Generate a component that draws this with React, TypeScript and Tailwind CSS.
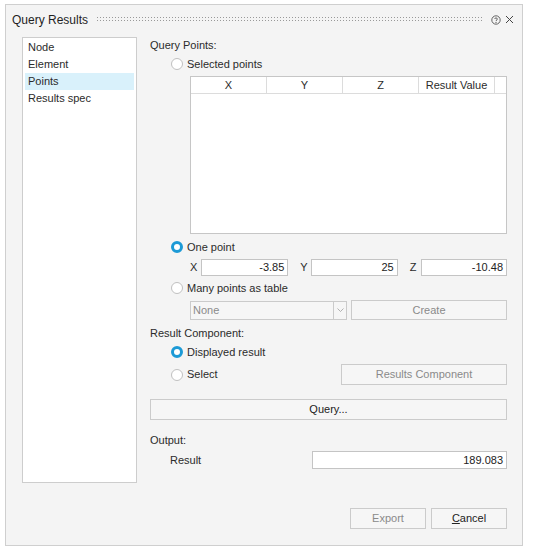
import React from 'react';

const font = { fontFamily: '"Liberation Sans", Arial, sans-serif' };

function Radio({ checked, label }: { checked?: boolean; label: string }) {
  return (
    <div className="flex items-center gap-[4px] pl-[21px]">
      {checked ? (
        <span className="h-[12px] w-[12px] rounded-full border-[3px] border-[#1c9ad6] bg-white" />
      ) : (
        <span className="h-[12px] w-[12px] rounded-full border border-[#c0c0c0] bg-white" />
      )}
      <span className="text-[#2b2b2b]">{label}</span>
    </div>
  );
}

function Field({ value, className }: { value: string; className: string }) {
  return (
    <div className={`flex h-[17px] items-center justify-end border border-[#c4c4c4] bg-white pr-[3px] text-[#222] ${className}`}>
      {value}
    </div>
  );
}

function Button({ label, className, disabled }: { label: React.ReactNode; className: string; disabled?: boolean }) {
  return (
    <div
      className={`flex items-center justify-center border border-[#cbcbcb] bg-[#f6f6f6] ${disabled ? 'text-[#8a8a8a]' : 'text-[#222]'} ${className}`}
    >
      {label}
    </div>
  );
}

export default function App() {
  return (
    <div className="h-[553px] w-[537px] bg-white pl-[5px] pt-[4px] text-[11px]" style={font}>
      <div className="flex h-[542px] w-[518px] flex-col border border-[#cfcfcf] bg-[#f4f4f4]">
        {/* title bar */}
        <div className="flex h-[29px] items-center pl-[6px] pr-[8px]">
          <span className="text-[12px] text-[#1f1f1f]">Query Results</span>
          <div className="ml-[8px] mr-[8px] h-[7px] flex-1 bg-[radial-gradient(circle,#999_0.7px,transparent_0.9px)] bg-[length:3px_3px]" />
          <svg width="10" height="10" viewBox="0 0 10 10" className="mr-[4px]">
            <circle cx="5" cy="5" r="4.2" fill="none" stroke="#555" strokeWidth="0.9" />
            <path d="M3.6 4 C3.6 2.6 6.4 2.6 6.4 4 C6.4 5 5 5 5 6" fill="none" stroke="#555" strokeWidth="0.9" />
            <circle cx="5" cy="7.4" r="0.55" fill="#555" />
          </svg>
          <svg width="9" height="9" viewBox="0 0 9 9">
            <path d="M1 1 L8 8 M8 1 L1 8" stroke="#444" strokeWidth="1" />
          </svg>
        </div>

        <div className="flex pt-[3px]">
          {/* left list */}
          <div className="ml-[16px] h-[446px] w-[115px] border border-[#cdcdcd] bg-white px-[2px] pt-[1px] text-[#2b2b2b]">
            <div className="flex h-[17px] items-center pl-[3px]">Node</div>
            <div className="flex h-[17px] items-center pl-[3px]">Element</div>
            <div className="flex h-[17px] items-center bg-[#d9f1fb] pl-[3px]">Points</div>
            <div className="flex h-[17px] items-center pl-[3px]">Results spec</div>
          </div>

          {/* right panel */}
          <div className="ml-[13px] flex w-[357px] flex-col pt-[1px]">
            <div className="flex h-[15px] items-center text-[#2b2b2b]">Query Points:</div>
            <div className="flex h-[22px] items-center">
              <Radio label="Selected points" />
            </div>

            <div className="ml-[40px] mt-[1px] h-[158px] w-[317px] border border-[#c6c6c6] bg-white">
              <div className="flex h-[17px] border-b border-[#dcdcdc] text-[#2b2b2b]">
                <div className="flex w-[76px] items-center justify-center border-r border-[#dcdcdc]">X</div>
                <div className="flex w-[76px] items-center justify-center border-r border-[#dcdcdc]">Y</div>
                <div className="flex w-[76px] items-center justify-center border-r border-[#dcdcdc]">Z</div>
                <div className="flex w-[76px] items-center justify-center border-r border-[#dcdcdc]">Result Value</div>
                <div className="flex-1" />
              </div>
            </div>

            <div className="mt-[2px] flex h-[22px] items-center">
              <Radio checked label="One point" />
            </div>

            <div className="flex h-[18px] items-center pl-[40px] text-[#2b2b2b]">
              <span className="w-[11px]">X</span>
              <Field value="-3.85" className="w-[88px]" />
              <span className="ml-[12px] w-[11px]">Y</span>
              <Field value="25" className="w-[87px]" />
              <span className="ml-[12px] w-[11px]">Z</span>
              <Field value="-10.48" className="w-[87px]" />
            </div>

            <div className="mt-[1px] flex h-[22px] items-center">
              <Radio label="Many points as table" />
            </div>

            <div className="mt-[1px] flex h-[20px] items-center pl-[40px]">
              <div className="flex h-[19px] w-[157px] border border-[#cbcbcb] bg-[#f6f6f6] text-[#8a8a8a]">
                <span className="flex flex-1 items-center pl-[2px]">None</span>
                <span className="flex w-[13px] items-center justify-center border-l border-[#cbcbcb]">
                  <svg width="7" height="4" viewBox="0 0 7 4">
                    <path d="M0.5 0.5 L3.5 3.5 L6.5 0.5" fill="none" stroke="#a0a0a0" strokeWidth="0.8" />
                  </svg>
                </span>
              </div>
              <Button label="Create" disabled className="ml-[4px] h-[20px] w-[156px]" />
            </div>

            <div className="mt-[4px] flex h-[18px] items-center text-[#2b2b2b]">Result Component:</div>
            <div className="flex h-[20px] items-center">
              <Radio checked label="Displayed result" />
            </div>
            <div className="mt-[1px] flex h-[23px] items-center justify-between">
              <Radio label="Select" />
              <Button label="Results Component" disabled className="h-[21px] w-[166px]" />
            </div>

            <Button label="Query..." className="mt-[13px] h-[21px] w-[357px]" />

            <div className="mt-[11px] flex h-[18px] items-center text-[#2b2b2b]">Output:</div>
            <div className="mt-[1px] flex h-[20px] items-center justify-between pl-[20px] text-[#2b2b2b]">
              <span>Result</span>
              <Field value="189.083" className="h-[18px] w-[195px]" />
            </div>

            <div className="mt-[38px] flex justify-end gap-[5px]">
              <Button label="Export" disabled className="h-[21px] w-[76px]" />
              <Button
                label={
                  <span>
                    <span className="underline">C</span>ancel
                  </span>
                }
                className="h-[21px] w-[76px]"
              />
            </div>
          </div>
        </div>
      </div>
    </div>
  );
}
